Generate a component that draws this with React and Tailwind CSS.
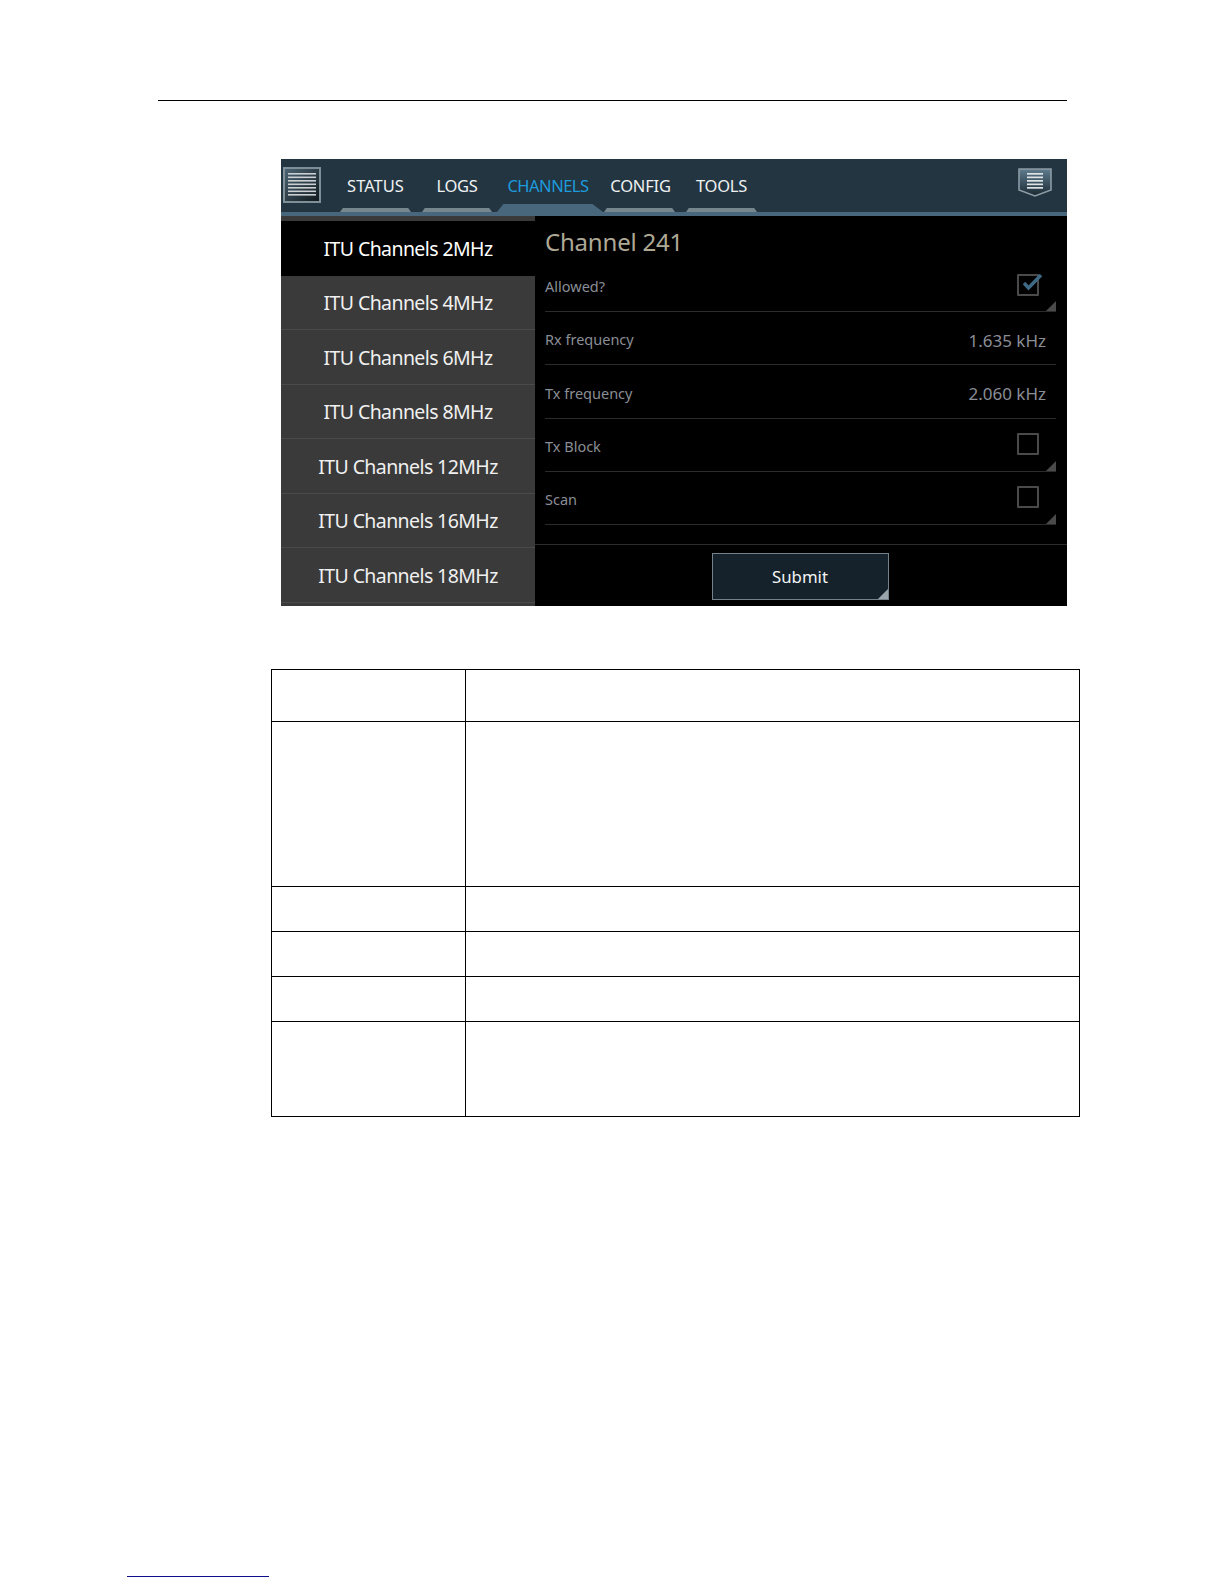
const tabs = [
  { label: 'STATUS', w: 'w-[71px]', ml: 'ml-0', track: 'tracking-[0px]' },
  { label: 'LOGS', w: 'w-[70px]', ml: 'ml-[11px]', track: 'tracking-[-0.3px]' },
  { label: 'CHANNELS', w: 'w-[106px]', ml: 'ml-[5px]', track: 'tracking-[-0.5px] pr-[4px]', active: true },
  { label: 'CONFIG', w: 'w-[71px]', ml: 'ml-[1px]', track: 'tracking-[-0.2px] pl-[2px]' },
  { label: 'TOOLS', w: 'w-[71px]', ml: 'ml-[11px]', track: 'tracking-[-0.3px]' },
]

const channels = ['2MHz', '4MHz', '6MHz', '8MHz', '12MHz', '16MHz', '18MHz']

function Corner({ color = 'border-b-[#4a4a4a]' }) {
  return (
    <span className={`absolute right-0 bottom-0 w-0 h-0 border-l-[10px] border-l-transparent border-b-[10px] ${color}`}></span>
  )
}

function MenuIcon() {
  return (
    <svg width="38" height="36" viewBox="0 0 38 36" className="block">
      <defs>
        <linearGradient id="menuBg" x1="0" y1="0" x2="1" y2="1">
          <stop offset="0" stopColor="#4d6675" />
          <stop offset="1" stopColor="#0f171c" />
        </linearGradient>
      </defs>
      <rect x="1" y="1" width="36" height="34" fill="url(#menuBg)" stroke="#7f8f98" strokeWidth="2" />
      {[6, 9.5, 13, 16.5, 20, 23.5, 27].map((y) => (
        <rect key={y} x="5" y={y} width="28" height="1.6" fill="#c9cfd3" />
      ))}
    </svg>
  )
}

function ShieldIcon() {
  return (
    <svg width="34" height="29" viewBox="0 0 34 29" className="block">
      <defs>
        <linearGradient id="shieldBg" x1="0" y1="0" x2="0" y2="1">
          <stop offset="0" stopColor="#5f7c8e" />
          <stop offset="1" stopColor="#1a2932" />
        </linearGradient>
      </defs>
      <path d="M1 1H33V22L17 28L1 22Z" fill="url(#shieldBg)" stroke="#8d9ca5" strokeWidth="1.6" />
      {[5, 8.5, 12, 15.5, 19].map((y) => (
        <rect key={y} x="9" y={y} width="16" height="1.7" fill="#dde2e5" />
      ))}
    </svg>
  )
}

function Row({ label, value, checkbox, checked }) {
  return (
    <div className="relative h-[53.2px] border-b border-[#2c2c2c] flex items-center justify-between shrink-0">
      <span className="text-[14.5px] text-[#8a8e96] pt-[4px]">{label}</span>
      {value && <span className="text-[17px] text-[#8a8e96] pr-[10px] pt-[4px]">{value}</span>}
      {checkbox && (
        <>
          <span className="relative w-[22px] h-[22px] mr-[17px] mb-[1px] border-2 border-[#4a4a4a] rounded-[1px]">
            {checked && (
              <svg width="26" height="18" viewBox="0 0 26 18" className="absolute left-[-2px] top-[-2px]">
                <path d="M7 9L11.5 14L24 1" fill="none" stroke="#3f6a85" strokeWidth="3.4" />
              </svg>
            )}
          </span>
          <Corner />
        </>
      )}
    </div>
  )
}

function TableRow({ h }) {
  return (
    <div className={`flex border-b border-black last:border-b-0 ${h}`}>
      <div className="w-[194px] border-r border-black"></div>
      <div className="flex-1"></div>
    </div>
  )
}

export default function App() {
  return (
    <div className="w-[1224px] h-[1584px] bg-white overflow-hidden font-['Noto_Sans','Open_Sans',sans-serif]">
      <div className="ml-[158px] w-[909px] pt-[100px] border-b border-black box-content"></div>

      {/* device screen */}
      <div className="ml-[281px] mt-[58px] w-[786px] h-[447px] bg-black flex flex-col">
        <div className="h-[53px] bg-[#233541] flex relative shrink-0">
          <div className="ml-[2px] mt-[8px]">
            <MenuIcon />
          </div>
          <div className="ml-[19px] flex items-end">
            {tabs.map((t) => (
              <div key={t.label} className={`${t.w} ${t.ml} h-full flex flex-col items-center`}>
                <span className={`mt-[15px] text-[16.5px] leading-6 whitespace-nowrap ${t.track} ${t.active ? 'text-[#1d9bdc]' : 'text-[#eef1f2]'}`}>
                  {t.label}
                </span>
                {t.active ? (
                  <span className="mt-auto w-full h-[8px] bg-[#48677d] [clip-path:polygon(0_100%,6%_0,90%_0,100%_100%)]"></span>
                ) : (
                  <span className="mt-auto w-full h-[4px] bg-[#76868f] [clip-path:polygon(0_100%,4%_0,96%_0,100%_100%)]"></span>
                )}
              </div>
            ))}
          </div>
          <div className="absolute right-[15px] top-[9px]">
            <ShieldIcon />
          </div>
        </div>
        <div className="h-[4px] bg-[#48677d] shrink-0"></div>

        <div className="flex flex-1 min-h-0">
          <div className="w-[254px] shrink-0 bg-[#3a3a3a] flex flex-col pt-[5px] overflow-hidden">
            {channels.map((c, i) => (
              <div
                key={c}
                className={`h-[54.5px] shrink-0 flex items-center justify-center pt-[1px] text-[19.5px] tracking-[-0.6px] border-b ${
                  i === 0 ? 'bg-black border-black text-white' : 'border-[#4a4a4a] text-[#f0f0f0]'
                }`}
              >
                ITU Channels {c}
              </div>
            ))}
          </div>

          <div className="flex-1 flex flex-col">
            <div className="pl-[10px] pr-[11px]">
              <div className="h-[43px] pt-[10px] text-[24px] tracking-[-0.2px] leading-8 text-[#aea996]">Channel 241</div>
              <Row label="Allowed?" checkbox checked />
              <Row label="Rx frequency" value="1.635 kHz" />
              <Row label="Tx frequency" value="2.060 kHz" />
              <Row label="Tx Block" checkbox />
              <Row label="Scan" checkbox />
            </div>
            <div className="mt-[19px] border-t border-[#2c2c2c] flex-1 flex justify-center pt-[8px]">
              <div className="relative mr-[2px] w-[177px] h-[47px] bg-[#16222b] border border-[#75828a] flex items-center justify-center text-[16.8px] text-[#f2f4f5]">
                Submit
                <Corner color="border-b-[#9aa5ab]" />
              </div>
            </div>
          </div>
        </div>
      </div>

      {/* empty table */}
      <div className="ml-[271px] mt-[63px] w-[809px] border border-black">
        <TableRow h="h-[52px]" />
        <TableRow h="h-[165px]" />
        <TableRow h="h-[45px]" />
        <TableRow h="h-[45px]" />
        <TableRow h="h-[45px]" />
        <TableRow h="h-[94px]" />
      </div>

      {/* footnote rule */}
      <div className="ml-[127px] mt-[459px] w-[142px] h-[1px] bg-[#0f0f8c]"></div>
    </div>
  )
}
